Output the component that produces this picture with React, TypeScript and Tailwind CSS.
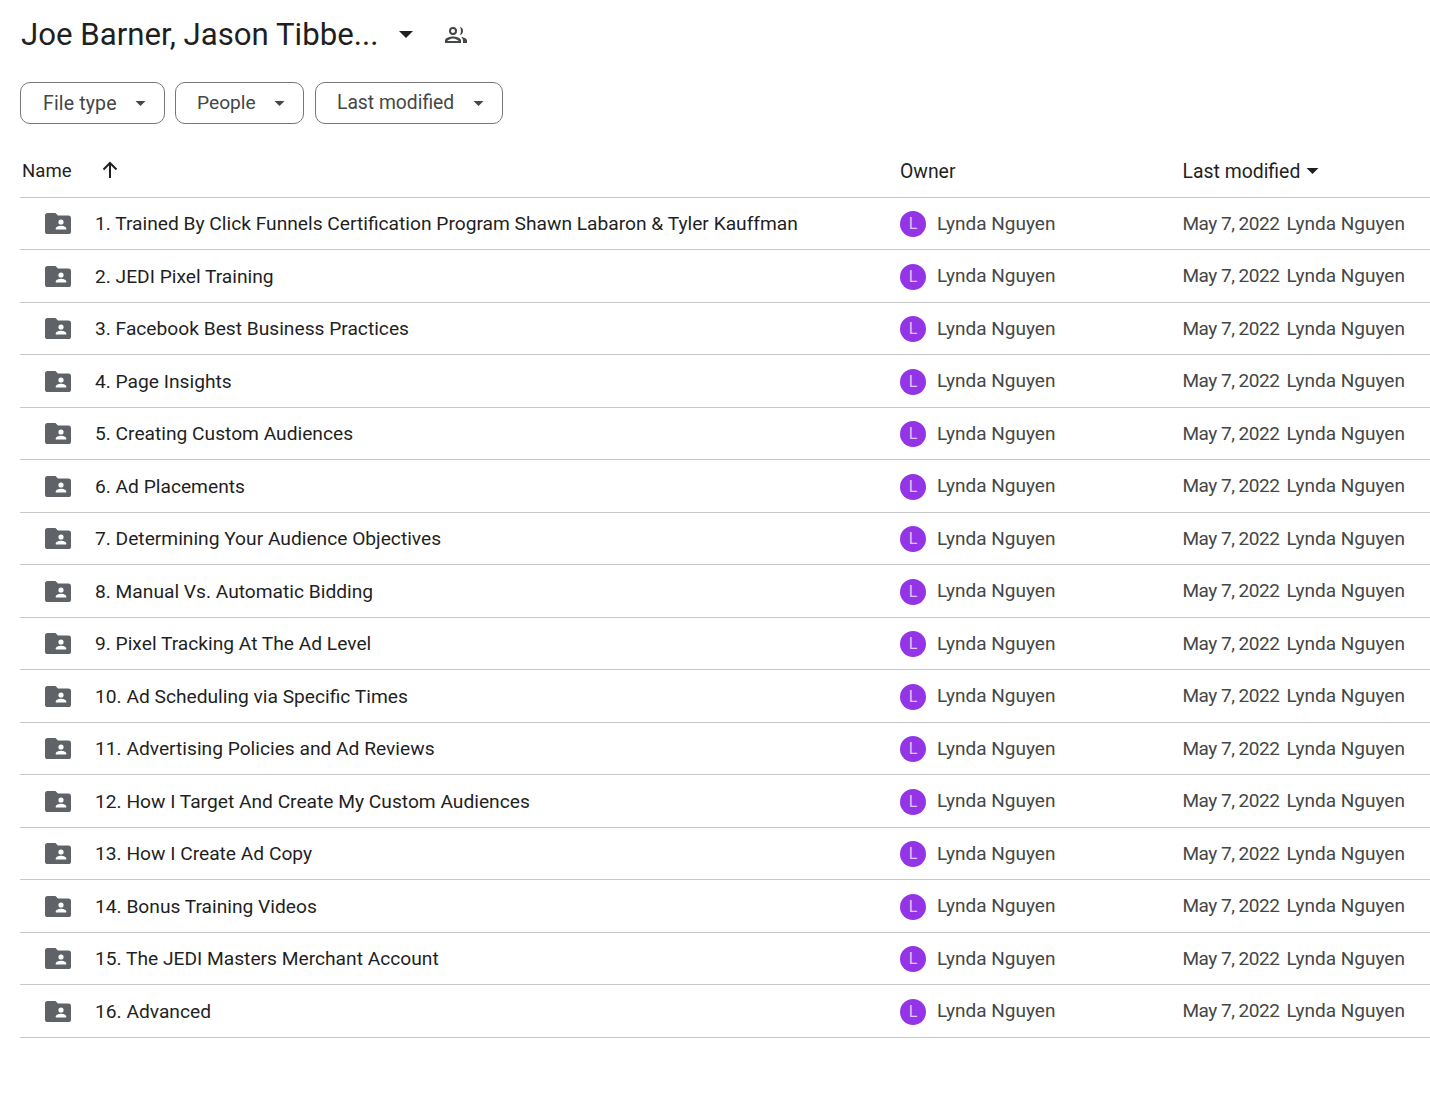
const rows = [
  "1. Trained By Click Funnels Certification Program Shawn Labaron & Tyler Kauffman",
  "2. JEDI Pixel Training",
  "3. Facebook Best Business Practices",
  "4. Page Insights",
  "5. Creating Custom Audiences",
  "6. Ad Placements",
  "7. Determining Your Audience Objectives",
  "8. Manual Vs. Automatic Bidding",
  "9. Pixel Tracking At The Ad Level",
  "10. Ad Scheduling via Specific Times",
  "11. Advertising Policies and Ad Reviews",
  "12. How I Target And Create My Custom Audiences",
  "13. How I Create Ad Copy",
  "14. Bonus Training Videos",
  "15. The JEDI Masters Merchant Account",
  "16. Advanced",
];

const font = "font-['Roboto',sans-serif]";

function Caret({ className }: { className: string }) {
  return (
    <svg viewBox="0 0 12 6" className={className} fill="currentColor">
      <path d="M0 0h12L6 6z" />
    </svg>
  );
}

function SharedFolder() {
  return (
    <svg viewBox="0 0 26 21" className="w-[26px] h-[21px] text-[#5f6368]" fill="currentColor">
      <path d="M2.6 0h7.8l2.6 2.6h10.4A2.6 2.6 0 0 1 26 5.2v13.2a2.6 2.6 0 0 1-2.6 2.6H2.6A2.6 2.6 0 0 1 0 18.4V2.6A2.6 2.6 0 0 1 2.6 0z" />
      <circle cx="16" cy="9" r="2.6" fill="#fff" />
      <path d="M10.8 16.6v-1.3c0-1.7 3.5-2.6 5.2-2.6s5.2.9 5.2 2.6v1.3z" fill="#fff" />
    </svg>
  );
}

function People() {
  return (
    <svg viewBox="0 0 24 24" className="w-[24px] h-[24px] text-[#444746]" fill="currentColor">
      <path d="M9 12a4 4 0 1 0 0-8 4 4 0 0 0 0 8zm0-6a2 2 0 1 1 0 4 2 2 0 0 1 0-4zm0 7.500c-2.700 0-8 1.300-8 4V20h16v-2.500c0-2.700-5.300-4-8-4zM3.300 18c.6-.8 3.300-2.500 5.700-2.500s5.100 1.700 5.700 2.500zM15 12a4 4 0 0 0 .9-7.900c.7 1.100 1.100 2.500 1.100 3.900s-.4 2.800-1.100 3.900zm1.800 1.700c1.300.9 2.200 2.200 2.200 3.800V20h4v-2.500c0-2-3.400-3.300-6.200-3.800z" />
    </svg>
  );
}

function Chip({ label, cls }: { label: string; cls: string }) {
  return (
    <button className={`${cls} h-[42px] flex items-center justify-between pr-[18px] border border-[#747775] rounded-[10px] text-[#444746]`}>
      <span className="pt-[1px]">{label}</span>
      <Caret className="w-[11px] h-[5px] text-[#444746]" />
    </button>
  );
}

export default function App() {
  return (
    <div className={`${font} w-[1430px] h-[1093px] bg-white pl-[20px] overflow-hidden`}>
      <div className="h-[82px] flex items-center pb-[13px]">
        <span className="pl-[1px] pt-[2px] text-[31.2px] text-[#1f1f1f] w-[378px] whitespace-nowrap">Joe Barner, Jason Tibbe...</span>
        <Caret className="ml-[1px] w-[14px] h-[7px] text-[#1f1f1f]" />
        <span className="ml-[31px] flex"><People /></span>
      </div>
      <div className="flex">
        <Chip label="File type" cls="w-[145px] pl-[22px] text-[19.5px] tracking-[0.15px]" />
        <Chip label="People" cls="w-[129px] ml-[10px] pl-[21px] text-[19.2px]" />
        <Chip label="Last modified" cls="w-[188px] ml-[11px] pl-[21px] text-[19.3px]" />
      </div>
      <div className="mt-[21px] h-[52.500px] flex items-center border-b border-[#c7c7c7] text-[19.4px] text-[#1f1f1f]">
        <div className="w-[880px] flex items-center pl-[2px]">
          <span className="w-[49px] text-[18.6px] pt-[2px]">Name</span>
          <svg viewBox="0 0 18 18" className="ml-[30px] w-[18px] h-[18px] mb-[2px]" fill="none" stroke="#1f1f1f" strokeWidth="2">
            <path d="M9 17V2M2.500 8.500 9 2l6.500 6.500" />
          </svg>
        </div>
        <div className="w-[282.500px] pt-[1px]">Owner</div>
        <div className="flex items-center pt-[1px]">
          <span>Last modified</span>
          <Caret className="ml-[6px] w-[13px] h-[6px] text-[#1f1f1f]" />
        </div>
      </div>
      {rows.map((r) => (
        <div key={r} className="h-[52.500px] pt-[1.500px] flex items-center border-b border-[#c7c7c7]">
          <div className="w-[880px] flex items-center pl-[25px]">
            <SharedFolder />
            <span className="ml-[24px] pt-[1px] text-[19.2px] text-[#1f1f1f] whitespace-nowrap">{r}</span>
          </div>
          <div className="w-[282.500px] flex items-center">
            <span className="w-[26px] h-[26px] rounded-full bg-[#9334e6] text-[#e0c3f8] text-[16px] flex items-center justify-center">L</span>
            <span className="ml-[11px] text-[19px] text-[#444746]">Lynda Nguyen</span>
          </div>
          <div className="flex text-[19px] text-[#444746] whitespace-nowrap">
            <span className="w-[104px] tracking-[-0.5px]">May 7, 2022</span>
            <span>Lynda Nguyen</span>
          </div>
        </div>
      ))}
    </div>
  );
}
